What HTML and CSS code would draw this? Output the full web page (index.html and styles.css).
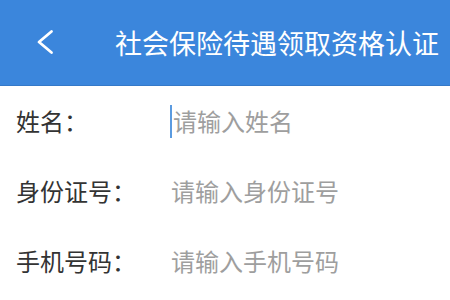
FILE: index.html
```html
<!DOCTYPE html>
<html lang="zh-CN">
<head>
<meta charset="utf-8">
<link rel="stylesheet" href="styles.css">
</head>
<body>
<header class="topbar">
  <div class="back">
    <svg width="18" height="26" viewBox="0 0 18 26"><path d="M15.5 2.5 L3 13 L15.5 23.5" fill="none" stroke="#fff" stroke-width="2.8" stroke-linecap="round" stroke-linejoin="round"/></svg>
  </div>
  <h1 class="title">社会保险待遇领取资格认证</h1>
</header>
<main class="form">
  <div class="row">
    <div class="label">姓名：</div>
    <div class="field"><span class="caret"></span><span class="ph">请输入姓名</span></div>
  </div>
  <div class="row">
    <div class="label">身份证号：</div>
    <div class="field"><span class="ph">请输入身份证号</span></div>
  </div>
  <div class="row">
    <div class="label">手机号码：</div>
    <div class="field"><span class="ph">请输入手机号码</span></div>
  </div>
</main>
</body>
</html>
```
FILE: styles.css
```css
html, body {
  margin: 0;
  padding: 0;
  background: #ffffff;
  font-family: "Noto Sans CJK SC", "Noto Sans", sans-serif;
  width: 450px;
  height: 300px;
  overflow: hidden;
}
.topbar {
  height: 85px;
  background: #3b86dc;
  border-bottom: 1px solid #3579c8;
  display: flex;
  align-items: center;
  box-sizing: content-box;
}
.back {
  width: 18px;
  height: 26px;
  margin-left: 36px;
  margin-bottom: 2px;
  display: flex;
}
.title {
  margin: 0 0 0 61px;
  font-size: 27px;
  font-weight: normal;
  color: #ffffff;
  line-height: 1;
  white-space: nowrap;
}
.form {
  display: flex;
  flex-direction: column;
}
.row {
  height: 70px;
  display: flex;
  align-items: center;
  padding-left: 16px;
}
.label {
  width: 155px;
  font-size: 24px;
  color: #333333;
  line-height: 1;
  white-space: nowrap;
}
.field {
  display: flex;
  align-items: center;
  font-size: 24px;
  line-height: 1;
}
.caret {
  display: inline-block;
  width: 2px;
  height: 33px;
  background: #5b9be0;
  margin-right: 1px;
  margin-left: -1px;
}
.ph {
  color: #9e9e9e;
  white-space: nowrap;
}
```
